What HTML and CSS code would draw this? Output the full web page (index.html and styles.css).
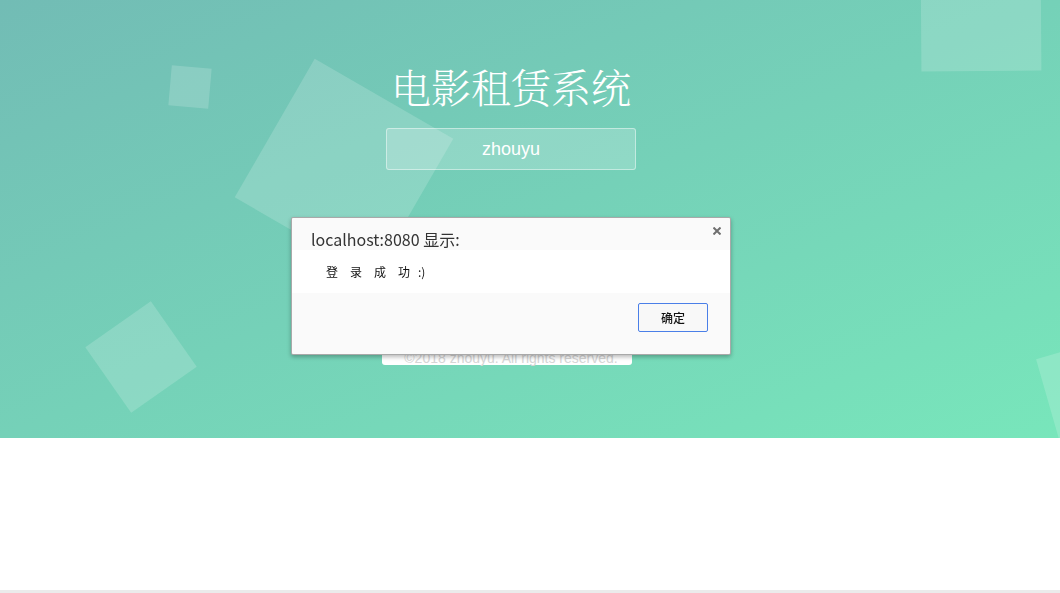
FILE: index.html
```html
<!DOCTYPE html>
<html lang="zh-CN">
<head>
<meta charset="utf-8">
<title>电影租赁系统</title>
<link rel="stylesheet" href="styles.css">
</head>
<body>
<div class="page">
  <header class="hero">
    <span class="bubble b1"></span>
    <span class="bubble b2"></span>
    <span class="bubble b3"></span>
    <span class="bubble b4"></span>
    <span class="bubble b5"></span>
    <div class="content">
      <h1 class="title">电影租赁系统</h1>
      <div class="field">zhouyu</div>
      <div class="copy">©2018 zhouyu. All rights reserved.</div>
    </div>
  </header>
  <div class="blank"></div>
</div>

<div class="alert" role="dialog">
  <div class="alert-head">
    <span class="alert-title">localhost:8080 显示:</span>
    <svg class="alert-close" width="8" height="8" viewBox="0 0 8 8"><path d="M0.5 0.5L7.5 7.5M7.5 0.5L0.5 7.5" stroke="#6f6f6f" stroke-width="2"/></svg>
  </div>
  <div class="alert-body">登　录　成　功<span class="smile">:)</span></div>
  <div class="alert-foot">
    <button class="alert-btn">确定</button>
  </div>
</div>
</body>
</html>
```
FILE: styles.css
```css
html, body {
  margin: 0;
  padding: 0;
}
body {
  font-family: "Noto Sans CJK SC", "Liberation Sans", sans-serif;
  background: #fff;
}
.page {
  border-bottom: 3px solid #ebebeb;
}
.hero {
  position: relative;
  height: 438px;
  overflow: hidden;
  background: linear-gradient(to bottom right, #72bcb5 0%, #78e6bb 100%);
}
.bubble {
  position: absolute;
  display: block;
  background: rgba(255, 255, 255, 0.17);
}
.b1 { width: 40px; height: 40px; left: 170px; top: 67px; transform: rotate(5deg); }
.b2 { width: 160px; height: 160px; left: 264px; top: 88px; transform: rotate(30deg); }
.b3 { width: 80px; height: 80px; left: 101px; top: 317px; transform: rotate(55deg); }
.b4 { width: 120px; height: 120px; left: 921px; top: -49px; transform: rotate(-0.4deg); }
.b5 { width: 160px; height: 160px; left: 1055px; top: 334px; transform: rotate(-16deg); }

.content {
  position: relative;
  width: 1022px;
  display: flex;
  flex-direction: column;
  align-items: center;
}
.title {
  margin: 62px 0 0;
  font-family: "Noto Serif CJK SC", "Noto Sans CJK SC", serif;
  font-weight: 300;
  font-size: 40px;
  line-height: 48px;
  color: #fff;
}
.field {
  margin-top: 18px;
  box-sizing: border-box;
  width: 250px;
  height: 42px;
  padding: 10px 15px;
  border: 1px solid rgba(255, 255, 255, 0.45);
  border-radius: 3px;
  background: rgba(255, 255, 255, 0.2);
  font-family: "Liberation Sans", Arial, sans-serif;
  font-size: 18px;
  line-height: 20px;
  text-align: center;
  color: #fff;
}
.copy {
  margin: 155px 8px 0 0;
  box-sizing: border-box;
  width: 250px;
  height: 40px;
  padding: 25px 0 0 8px;
  border-radius: 3px;
  background: #fff;
  font-family: "Liberation Sans", Arial, sans-serif;
  font-size: 14px;
  line-height: 16px;
  text-align: center;
  white-space: nowrap;
  color: #d6d6d6;
}
.blank {
  height: 152px;
}

.alert {
  position: fixed;
  left: 291px;
  top: 217px;
  width: 440px;
  box-sizing: border-box;
  border: 1px solid rgba(0, 0, 0, 0.32);
  border-radius: 2px;
  background: #fafafa;
  box-shadow: 0 2px 4px rgba(0, 0, 0, 0.28);
}
.alert-head {
  display: flex;
  justify-content: space-between;
  align-items: flex-start;
  box-sizing: border-box;
  height: 32px;
  padding: 10px 9px 0 19px;
}
.alert-title {
  font-size: 16px;
  line-height: 22px;
  color: #333;
}
.alert-close {
  margin-top: -1px;
}
.alert-body {
  box-sizing: border-box;
  height: 43px;
  padding: 14px 0 0 34px;
  background: #fff;
  font-size: 12px;
  line-height: 16px;
  color: #111;
}
.smile {
  margin-left: 8px;
}
.alert-foot {
  display: flex;
  justify-content: flex-end;
  box-sizing: border-box;
  height: 61px;
  padding: 10px 22px 0 0;
}
.alert-btn {
  box-sizing: border-box;
  width: 70px;
  height: 29px;
  padding: 0;
  border: 1px solid #4a7fe8;
  border-radius: 2px;
  background: #f8f8f8;
  font-family: "Noto Sans CJK SC", sans-serif;
  font-size: 12px;
  font-weight: 500;
  color: #111;
}
```
